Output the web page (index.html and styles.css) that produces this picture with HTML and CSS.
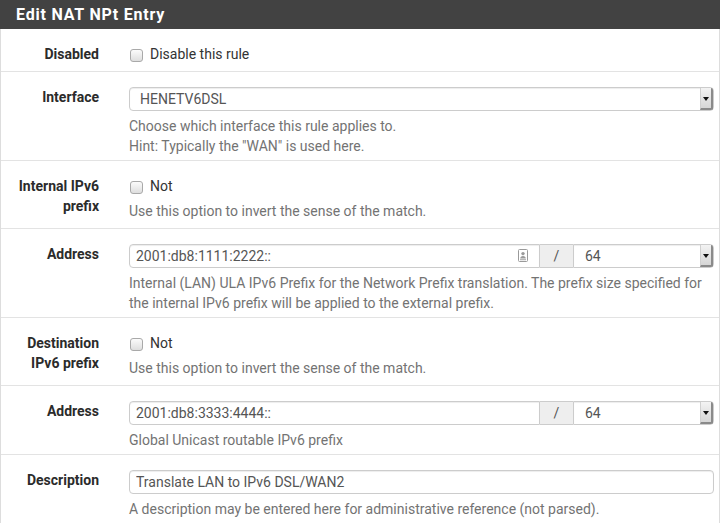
FILE: index.html
```html
<!DOCTYPE html>
<html>
<head>
<meta charset="utf-8">
<title>Edit NAT NPt Entry</title>
<link rel="stylesheet" href="styles.css">
</head>
<body>
<div class="panel">
  <h2 class="panel-heading">Edit NAT NPt Entry</h2>
  <div class="panel-body">
    <div class="row cb">
      <div class="label">Disabled</div>
      <div class="field">
        <label class="check"><input type="checkbox"> Disable this rule</label>
      </div>
    </div>
    <div class="row">
      <div class="label">Interface</div>
      <div class="field">
        <div class="select-wrap full">
          <select class="select"><option>HENETV6DSL</option></select>
          <span class="caret"></span>
        </div>
        <div class="help">Choose which interface this rule applies to.<br>Hint: Typically the "WAN" is used here.</div>
      </div>
    </div>
    <div class="row cb">
      <div class="label">Internal IPv6 prefix</div>
      <div class="field">
        <label class="check"><input type="checkbox"> Not</label>
        <div class="help">Use this option to invert the sense of the match.</div>
      </div>
    </div>
    <div class="row">
      <div class="label">Address</div>
      <div class="field">
        <div class="group">
          <div class="input-wrap">
            <input class="input left" type="text" value="2001:db8:1111:2222::">
            <svg class="autofill" width="10" height="13" viewBox="0 0 10 13"><rect x="0.5" y="0.5" width="9" height="12" rx="1" fill="#fff" stroke="#9a9a9a"/><circle cx="5" cy="4.6" r="1.7" fill="#9a9a9a"/><path d="M2.2 9.6 Q2.4 7 5 7 Q7.6 7 7.8 9.6 Z" fill="#9a9a9a"/><rect x="2" y="10.3" width="6" height="0.9" fill="#9a9a9a"/></svg>
          </div>
          <span class="addon">/</span>
          <div class="select-wrap mask">
            <select class="select right"><option>64</option></select>
            <span class="caret"></span>
          </div>
        </div>
        <div class="help">Internal (LAN) ULA IPv6 Prefix for the Network Prefix translation. The prefix size specified for the internal IPv6 prefix will be applied to the external prefix.</div>
      </div>
    </div>
    <div class="row cb">
      <div class="label">Destination IPv6 prefix</div>
      <div class="field">
        <label class="check"><input type="checkbox"> Not</label>
        <div class="help">Use this option to invert the sense of the match.</div>
      </div>
    </div>
    <div class="row">
      <div class="label">Address</div>
      <div class="field">
        <div class="group">
          <div class="input-wrap">
            <input class="input left" type="text" value="2001:db8:3333:4444::">
          </div>
          <span class="addon">/</span>
          <div class="select-wrap mask">
            <select class="select right"><option>64</option></select>
            <span class="caret"></span>
          </div>
        </div>
        <div class="help">Global Unicast routable IPv6 prefix</div>
      </div>
    </div>
    <div class="row last">
      <div class="label">Description</div>
      <div class="field">
        <input class="input full" type="text" value="Translate LAN to IPv6 DSL/WAN2">
        <div class="help">A description may be entered here for administrative reference (not parsed).</div>
      </div>
    </div>
  </div>
</div>
</body>
</html>
```

FILE: styles.css
```css
html, body {
  margin: 0;
  padding: 0;
  background: #fff;
}
body {
  font-family: Roboto, "Liberation Sans", Arial, sans-serif;
  font-size: 14px;
  line-height: 20px;
  color: #333;
}
.panel {
  width: 720px;
}
.panel-heading {
  margin: 0;
  height: 29px;
  box-sizing: border-box;
  padding: 5px 16px 0;
  background: #424242;
  color: #fff;
  font-size: 16px;
  font-weight: 700;
  line-height: 20px;
  letter-spacing: 0.8px;
}
.panel-body {
  border-left: 1px solid #ddd;
  border-right: 1px solid #ddd;
}
.row {
  display: grid;
  grid-template-columns: 113px 1fr;
  padding: 15px 0 4px;
  border-bottom: 1px solid #e3e3e3;
}
.row.cb {
  padding-bottom: 7px;
}
.row.last {
  border-bottom: 0;
}
.label {
  text-align: right;
  font-weight: 700;
  padding: 0 15px 0 12px;
  color: #2b2b2b;
}
.field {
  padding: 0 5px 0 15px;
  min-width: 0;
}
.check {
  display: flex;
  align-items: center;
  height: 20px;
  color: #333;
}
.check input {
  appearance: none;
  -webkit-appearance: none;
  width: 13px;
  height: 13px;
  margin: 3px 7px 0 1px;
  border: 1px solid #a9a9a9;
  border-radius: 3px;
  background: linear-gradient(#fbfbfb, #dedede);
  box-sizing: border-box;
}
.help {
  margin-top: 5px;
  color: #737373;
}
.input, .select {
  display: block;
  box-sizing: border-box;
  height: 24px;
  margin: 0;
  border: 1px solid #ccc;
  border-radius: 4px;
  box-shadow: inset 0 1px 1px rgba(0,0,0,.075);
  background: #fff;
  font-family: Roboto, "Liberation Sans", Arial, sans-serif;
  font-size: 14px;
  color: #555;
  outline: none;
}
.input {
  padding: 0 6px;
}
.input.full {
  width: 100%;
}
.select {
  appearance: none;
  -webkit-appearance: none;
  width: 100%;
  padding: 0 20px 0 10px;
}
.select-wrap {
  position: relative;
}
.caret {
  position: absolute;
  right: 1px;
  top: 1px;
  bottom: 1px;
  width: 13px;
  box-sizing: border-box;
  background: linear-gradient(#f3f3f3, #d6d6d6);
  border-left: 1px solid #d0d0d0;
  border-right: 2px solid #8a8a8a;
  border-bottom: 2px solid #8a8a8a;
  border-radius: 0 2px 2px 0;
  display: flex;
  align-items: center;
  justify-content: center;
}
.caret::after {
  content: "";
  border-left: 3px solid transparent;
  border-right: 3px solid transparent;
  border-top: 4px solid #111;
  margin-top: 1px;
}
.group {
  display: flex;
}
.input-wrap {
  position: relative;
  width: 411px;
}
.input-wrap .input {
  width: 100%;
}
.input.left {
  border-radius: 4px 0 0 4px;
}
.autofill {
  position: absolute;
  right: 12px;
  top: 5px;
}
.addon {
  width: 33px;
  height: 24px;
  box-sizing: border-box;
  border: 1px solid #ccc;
  border-left: 0;
  border-right: 0;
  background: #eee;
  color: #555;
  text-align: center;
  line-height: 22px;
}
.mask {
  flex: 1;
}
.select.right {
  border-radius: 0 4px 4px 0;
  padding-left: 11px;
}
```
